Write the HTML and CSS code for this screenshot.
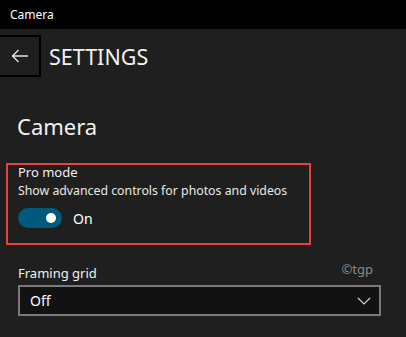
FILE: index.html
```html
<!DOCTYPE html>
<html>
<head>
<meta charset="utf-8">
<link rel="stylesheet" href="styles.css">
</head>
<body>
<div class="titlebar">Camera</div>
<div class="header">
  <div class="back">
    <svg width="18" height="14" viewBox="0 0 18 14"><path d="M17 7H1.5M7.5 1L1.5 7L7.5 13" fill="none" stroke="#e6e6e6" stroke-width="1.3"/></svg>
  </div>
  <div class="pagetitle">SETTINGS</div>
</div>
<main class="content">
  <h1 class="section">Camera</h1>
  <div class="highlight">
    <div class="label">Pro mode</div>
    <div class="desc">Show advanced controls for photos and videos</div>
    <div class="toggle-row">
      <div class="toggle"><span class="knob"></span></div>
      <span class="state">On</span>
    </div>
  </div>
  <div class="grid-row">
    <div class="label">Framing grid</div>
    <span class="watermark">©tgp</span>
  </div>
  <div class="select">
    <span>Off</span>
    <svg width="14" height="8" viewBox="0 0 14 8"><path d="M1 1L7 7L13 1" fill="none" stroke="#d0d0d0" stroke-width="1.2"/></svg>
  </div>
</main>
</body>
</html>
```
FILE: styles.css
```css
html, body {
  margin: 0;
  padding: 0;
  background: #1f1f1f;
  color: #fff;
  font-family: "Noto Sans", "Open Sans", sans-serif;
  width: 406px;
  height: 337px;
  overflow: hidden;
}
.titlebar {
  height: 29px;
  background: #000;
  font-size: 12px;
  line-height: 29px;
  padding-left: 10px;
  box-sizing: border-box;
}
.header {
  display: flex;
  align-items: center;
  margin-top: 6px;
  height: 42px;
}
.back {
  width: 41px;
  height: 42px;
  box-sizing: border-box;
  border: 2px solid #000;
  border-left: none;
  display: flex;
  align-items: center;
  justify-content: center;
}
.pagetitle {
  margin-left: 8px;
  font-size: 21.5px;
  color: #f2f2f2;
  font-weight: 400;
}
.content {
  padding: 0 0 0 18px;
}
.section {
  margin: 34px 0 0 -1px;
  font-size: 22px;
  font-weight: 400;
  line-height: 30px;
  color: #f2f2f2;
}
.highlight {
  margin: 22px 0 0 -12px;
  width: 305px;
  height: 82px;
  box-sizing: border-box;
  border: 2px solid #e8413f;
  padding: 0 0 0 10px;
}
.label {
  font-size: 13px;
  line-height: 18px;
  color: #f0f0f0;
}
.highlight .label {
  margin-top: -2px;
}
.desc {
  font-size: 12.3px;
  line-height: 18px;
  margin-top: 1px;
  color: #e8e8e8;
}
.toggle-row {
  display: flex;
  align-items: center;
  margin-top: 8px;
}
.toggle {
  width: 44px;
  height: 20px;
  border-radius: 10px;
  background: #005a7e;
  position: relative;
}
.knob {
  position: absolute;
  right: 6px;
  top: 5px;
  width: 10px;
  height: 10px;
  border-radius: 50%;
  background: #fff;
}
.state {
  margin-left: 11px;
  font-size: 14px;
}
.grid-row {
  display: flex;
  align-items: flex-end;
  margin-top: 15px;
  width: 363px;
  justify-content: space-between;
}
.watermark {
  color: #8a8a8a;
  font-size: 13px;
  margin-right: 8px;
  margin-bottom: 4px;
}
.select {
  margin-top: 3px;
  width: 363px;
  height: 31px;
  box-sizing: border-box;
  border: 2px solid #7a7a7a;
  background: #121212;
  display: flex;
  align-items: center;
  justify-content: space-between;
  padding: 0 8px 0 10px;
  font-size: 14px;
}
```
